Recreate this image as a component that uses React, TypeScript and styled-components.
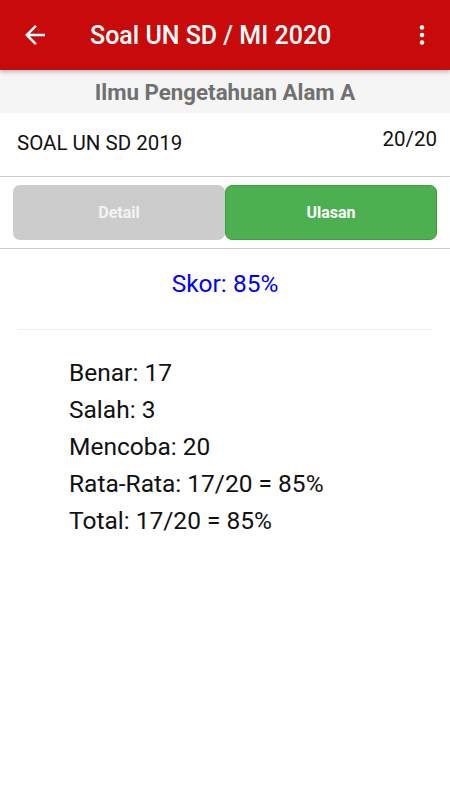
import styled, { createGlobalStyle } from 'styled-components';

const GlobalStyle = createGlobalStyle`
  html, body {
    margin: 0;
    padding: 0;
    background: #ffffff;
  }
  body {
    font-family: Roboto, "Liberation Sans", Arial, sans-serif;
  }
`;

const Screen = styled.div`
  width: 450px;
  min-height: 800px;
  background: #ffffff;
  display: flex;
  flex-direction: column;
`;

const AppBar = styled.header`
  height: 70px;
  flex-shrink: 0;
  display: flex;
  align-items: center;
  background: #c80a0a;
  box-shadow: 0 2px 4px rgba(0,0,0,0.25);
  position: relative;
  z-index: 1;
`;

const BarIcon = styled.div`
  width: 70px;
  height: 70px;
  display: flex;
  align-items: center;
  justify-content: center;
  flex-shrink: 0;
`;

const Title = styled.h1`
  flex: 1;
  margin: 0 0 0 20px;
  font-size: 25px;
  font-weight: 500;
  color: #ffffff;
`;

const MenuIcon = styled.div`
  width: 56px;
  height: 70px;
  display: flex;
  align-items: center;
  justify-content: center;
`;

const SubjectBar = styled.div`
  height: 43px;
  display: flex;
  align-items: center;
  justify-content: center;
  background: #f5f5f5;
  font-size: 22.3px;
  font-weight: 700;
  color: #707070;
`;

const PaperRow = styled.div`
  height: 63px;
  display: flex;
  justify-content: space-between;
  padding: 0 13px 0 17px;
  border-bottom: 1px solid #cccccc;
`;

const PaperName = styled.span`
  margin-top: 18px;
  font-size: 20.5px;
  color: #111111;
`;

const PaperCount = styled.span`
  margin-top: 14px;
  font-size: 20.5px;
  color: #111111;
`;

const Tabs = styled.div`
  display: grid;
  grid-template-columns: 1fr 1fr;
  padding: 8px 13px;
  border-bottom: 1px solid #cccccc;
`;

const TabButton = styled.button<{ $active?: boolean }>`
  height: 55px;
  border: ${({ $active }) => ($active ? '1px solid #3d9e40' : 'none')};
  border-radius: 7px;
  background: ${({ $active }) => ($active ? '#4caf50' : '#cccccc')};
  color: ${({ $active }) => ($active ? '#ffffff' : '#f4f4f4')};
  font-family: Roboto, "Liberation Sans", Arial, sans-serif;
  font-size: 16px;
  font-weight: 700;
`;

const Score = styled.div`
  height: 72px;
  display: flex;
  align-items: center;
  justify-content: center;
  font-size: 24.5px;
  color: #0000ff;
  padding-bottom: 3px;
  box-sizing: border-box;
`;

const Divider = styled.hr`
  margin: 8px 18px 0;
  border: none;
  border-top: 1px solid #eeeeee;
`;

const Stats = styled.div`
  padding: 24px 0 0 69px;
  display: flex;
  flex-direction: column;
`;

const StatLine = styled.div`
  font-size: 24.5px;
  line-height: 37px;
  color: #111111;
`;

const stats = [
  'Benar: 17',
  'Salah: 3',
  'Mencoba: 20',
  'Rata-Rata: 17/20 = 85%',
  'Total: 17/20 = 85%',
];

export default function App() {
  return (
    <Screen>
      <GlobalStyle />
      <AppBar>
        <BarIcon>
          <svg width="30" height="30" viewBox="0 0 24 24" fill="#ffffff">
            <path d="M20 11H7.83l5.59-5.59L12 4l-8 8 8 8 1.41-1.41L7.83 13H20v-2z" />
          </svg>
        </BarIcon>
        <Title>Soal UN SD / MI 2020</Title>
        <MenuIcon>
          <svg width="24" height="24" viewBox="0 0 24 24" fill="#ffffff">
            <circle cx="12" cy="4.5" r="2.3" />
            <circle cx="12" cy="12" r="2.3" />
            <circle cx="12" cy="19.5" r="2.3" />
          </svg>
        </MenuIcon>
      </AppBar>

      <SubjectBar>Ilmu Pengetahuan Alam A</SubjectBar>

      <PaperRow>
        <PaperName>SOAL UN SD 2019</PaperName>
        <PaperCount>20/20</PaperCount>
      </PaperRow>

      <Tabs>
        <TabButton>Detail</TabButton>
        <TabButton $active>Ulasan</TabButton>
      </Tabs>

      <Score>Skor: 85%</Score>
      <Divider />

      <Stats>
        {stats.map(s => (
          <StatLine key={s}>{s}</StatLine>
        ))}
      </Stats>
    </Screen>
  );
}
